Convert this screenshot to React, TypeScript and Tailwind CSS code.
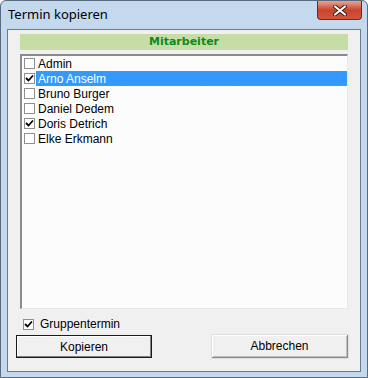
import { useState } from 'react'

const people = ['Admin', 'Arno Anselm', 'Bruno Burger', 'Daniel Dedem', 'Doris Detrich', 'Elke Erkmann']

function Check({ on }: { on: boolean }) {
  return (
    <span className="flex h-[11px] w-[11px] shrink-0 items-center justify-center border border-[#8f8f8f] bg-white">
      {on && (
        <svg width="9" height="9" viewBox="0 0 9 9">
          <path d="M1 4 L3.5 6.5 L8 1.5" fill="none" stroke="#000" strokeWidth="1.8" />
        </svg>
      )}
    </span>
  )
}

export default function App() {
  const [checked, setChecked] = useState<Record<string, boolean>>({ 'Arno Anselm': true, 'Doris Detrich': true })
  const [selected, setSelected] = useState('Arno Anselm')
  const [group, setGroup] = useState(true)

  return (
    <div className="h-[378px] w-[368px] overflow-hidden bg-white font-['Liberation_Sans',sans-serif] text-[12px] text-black">
      <div className="flex h-full w-full flex-col rounded-t-[6px] border border-[#5a6a80] bg-[#c4d9ee] px-[6px] pb-[5px]">
        {/* title bar */}
        <div className="flex h-[28px] shrink-0 items-start justify-between">
          <span className="pl-[1px] pt-[7px] text-[13px] font-['Noto_Sans',sans-serif] leading-none text-black">Termin kopieren</span>
          <div className="mr-[-1px] flex h-[19px] w-[45px] items-center justify-center rounded-b-[4px] border border-t-0 border-[#6b2a20] bg-gradient-to-b from-[#e8a393] via-[#c9432c] to-[#d4553b]">
            <svg width="14" height="11" viewBox="0 0 14 11">
              <path d="M2 1.5 L12 9.5 M12 1.5 L2 9.5" stroke="#3a1a14" strokeWidth="4" strokeLinecap="round" />
              <path d="M2 1.5 L12 9.5 M12 1.5 L2 9.5" stroke="#fff" strokeWidth="2.2" strokeLinecap="round" />
            </svg>
          </div>
        </div>
        {/* client area */}
        <div className="flex flex-1 flex-col border border-[#6d7a8a] bg-[#f0f0f0] px-[12px] pt-[4px]">
          <div className="flex h-[16px] items-center justify-center bg-[#c6dea6] font-['DejaVu_Sans',sans-serif] text-[11px] font-bold text-[#0f8a1a]">
            Mitarbeiter
          </div>
          <div className="mt-[4px] h-[255px] border-l-2 border-t-2 border-b border-r border-l-[#8a8a8a] border-t-[#8a8a8a] border-b-[#e8e8e8] border-r-[#e8e8e8] bg-[#fcfcfc]">
            {people.map((p) => (
              <div key={p} className="flex h-[15px] items-center pl-[2px]" onClick={() => setSelected(p)}>
                <span onClick={() => setChecked({ ...checked, [p]: !checked[p] })}>
                  <Check on={!!checked[p]} />
                </span>
                <span
                  className={
                    p === selected
                      ? 'ml-[1px] flex h-[15px] flex-1 items-center border border-dotted border-[#c77a30] bg-[#3399ff] pl-[1px] text-white'
                      : 'ml-[1px] flex h-[15px] flex-1 items-center pl-[2px]'
                  }
                >
                  {p}
                </span>
              </div>
            ))}
          </div>
          <div className="mt-[8px] flex h-[14px] items-center pl-[3px]" onClick={() => setGroup(!group)}>
            <Check on={group} />
            <span className="ml-[6px]">Gruppentermin</span>
          </div>
          <div className="mt-[4px] flex justify-between">
            <button className="ml-[-4px] h-[23px] w-[136px] border border-[#1a1a1a] bg-[#f0f0f0] shadow-[inset_-1px_-1px_0_#808080,inset_1px_1px_0_#fff]">
              Kopieren
            </button>
            <button className="h-[23px] w-[136px] border-b border-r border-[#8a8a8a] bg-[#f0f0f0] shadow-[inset_1px_1px_0_#fff,inset_-1px_-1px_0_#c0c0c0] outline outline-1 outline-[#e0e0e0]">
              Abbrechen
            </button>
          </div>
        </div>
      </div>
    </div>
  )
}
